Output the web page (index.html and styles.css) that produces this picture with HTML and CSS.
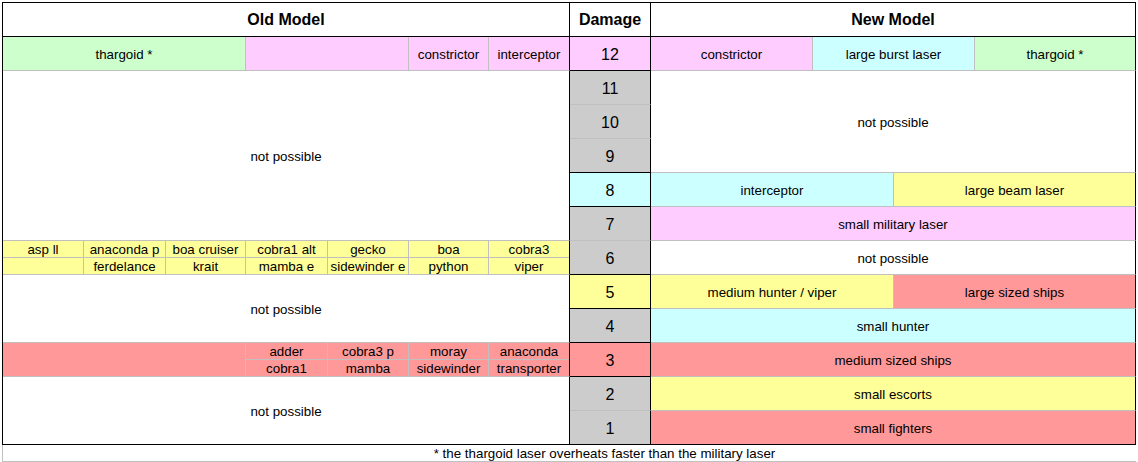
FILE: index.html
```html
<!DOCTYPE html>
<html>
<head>
<meta charset="utf-8">
<link rel="stylesheet" href="styles.css">
</head>
<body>
<div class="sheet">
  <div class="cell head s7 er">Old Model</div>
  <div class="cell head num-h er">Damage</div>
  <div class="cell head s6 er">New Model</div>

  <div class="cell green s3">thargoid *</div>
  <div class="cell pink s2"></div>
  <div class="cell pink">constrictor</div>
  <div class="cell pink er">interceptor</div>
  <div class="cell dmg pink er eb">12</div>
  <div class="cell pink s2">constrictor</div>
  <div class="cell cyan s2">large burst laser</div>
  <div class="cell green s2 er">thargoid *</div>

  <div class="cell s7 r5 er">not possible</div>
  <div class="cell dmg gray er">11</div>
  <div class="cell s6 r3 er">not possible</div>
  <div class="cell dmg gray er">10</div>
  <div class="cell dmg gray er eb">9</div>

  <div class="cell dmg cyan er eb">8</div>
  <div class="cell cyan s3">interceptor</div>
  <div class="cell yellow s3 er">large beam laser</div>

  <div class="cell dmg gray er">7</div>
  <div class="cell pink s6 er">small military laser</div>

  <div class="cell yellow pair"><span class="sub">asp ll</span><span class="sub"></span></div>
  <div class="cell yellow pair"><span class="sub">anaconda p</span><span class="sub">ferdelance</span></div>
  <div class="cell yellow pair"><span class="sub">boa cruiser</span><span class="sub">krait</span></div>
  <div class="cell yellow pair"><span class="sub">cobra1 alt</span><span class="sub">mamba e</span></div>
  <div class="cell yellow pair"><span class="sub">gecko</span><span class="sub">sidewinder e</span></div>
  <div class="cell yellow pair"><span class="sub">boa</span><span class="sub">python</span></div>
  <div class="cell yellow pair er"><span class="sub">cobra3</span><span class="sub">viper</span></div>
  <div class="cell dmg gray er eb">6</div>
  <div class="cell s6 er">not possible</div>

  <div class="cell s7 r2 er">not possible</div>
  <div class="cell dmg yellow er eb">5</div>
  <div class="cell yellow s3">medium hunter / viper</div>
  <div class="cell red s3 er">large sized ships</div>

  <div class="cell dmg gray er eb">4</div>
  <div class="cell cyan s6 er">small hunter</div>

  <div class="cell red s3"></div>
  <div class="cell red pair"><span class="sub">adder</span><span class="sub">cobra1</span></div>
  <div class="cell red pair"><span class="sub">cobra3 p</span><span class="sub">mamba</span></div>
  <div class="cell red pair"><span class="sub">moray</span><span class="sub">sidewinder</span></div>
  <div class="cell red pair er"><span class="sub">anaconda</span><span class="sub">transporter</span></div>
  <div class="cell dmg red er eb">3</div>
  <div class="cell red s6 er">medium sized ships</div>

  <div class="cell s7 r2 er eb">not possible</div>
  <div class="cell dmg gray er">2</div>
  <div class="cell yellow s6 er">small escorts</div>

  <div class="cell dmg gray er eb">1</div>
  <div class="cell red s6 er eb">small fighters</div>
</div>
<div class="note">* the thargoid laser overheats faster than the military laser</div>
</body>
</html>
```

FILE: styles.css
```css
html, body {
  margin: 0;
  padding: 0;
  background: #ffffff;
}

body {
  padding: 2px 0 0 2px;
  font-family: "Liberation Sans", Arial, sans-serif;
  font-size: 13.33px;
  color: #000000;
}

.sheet {
  display: grid;
  width: max-content;
  grid-template-columns: 81px 82px 80px 82px 81px 80px 81px 81px 82px 80px 81px 81px 82px 79px;
  grid-auto-rows: 34px;
  border-top: 1px solid #000;
  border-left: 1px solid #000;
}

.cell {
  box-sizing: border-box;
  border-right: 1px solid #c0c0c0;
  border-bottom: 1px solid #c0c0c0;
  display: flex;
  align-items: center;
  justify-content: center;
  text-align: center;
  white-space: nowrap;
  overflow: hidden;
  line-height: 16px;
  padding-top: 2px;
  background: #ffffff;
}

.head {
  font-weight: bold;
  font-size: 16px;
  border-bottom-color: #000;
  padding-top: 0;
}

.dmg {
  font-size: 16px;
}

.er { border-right-color: #000; }
.eb { border-bottom-color: #000; }

.s2 { grid-column: span 2; }
.s3 { grid-column: span 3; }
.s6 { grid-column: span 6; }
.s7 { grid-column: span 7; }
.r2 { grid-row: span 2; }
.r3 { grid-row: span 3; }
.r5 { grid-row: span 5; }

.green { background: #ccffcc; }
.pink { background: #ffccff; }
.cyan { background: #ccffff; }
.yellow { background: #ffff99; }
.red { background: #ff9999; }
.gray { background: #cccccc; }

.pair {
  flex-direction: column;
  align-items: stretch;
  justify-content: flex-start;
  padding-top: 0;
}

.sub {
  display: block;
  box-sizing: border-box;
  height: 16px;
  line-height: 16px;
  padding-top: 1px;
  text-align: center;
}

.sub:first-child {
  height: 17px;
  border-bottom: 1px solid #c0c0c0;
}

.note {
  box-sizing: border-box;
  width: 1134px;
  height: 17px;
  line-height: 16px;
  padding-top: 1px;
  border-left: 1px solid #c0c0c0;
  border-bottom: 1px solid #c0c0c0;
  text-align: center;
  padding-left: 70px;
  white-space: nowrap;
}
```
